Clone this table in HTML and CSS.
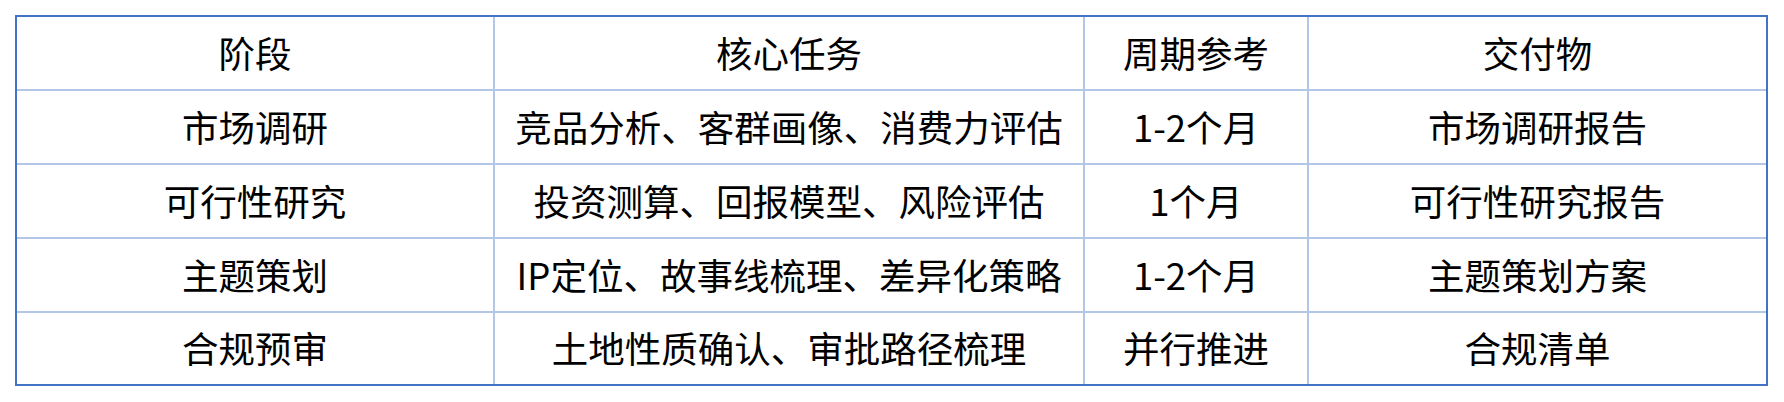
FILE: index.html
```html
<!DOCTYPE html>
<html lang="zh-CN">
<head>
<meta charset="utf-8">
<link rel="stylesheet" href="styles.css">
</head>
<body>
<div class="table">
  <div class="cell">阶段</div>
  <div class="cell">核心任务</div>
  <div class="cell">周期参考</div>
  <div class="cell">交付物</div>

  <div class="cell">市场调研</div>
  <div class="cell">竞品分析、客群画像、消费力评估</div>
  <div class="cell">1-2个月</div>
  <div class="cell">市场调研报告</div>

  <div class="cell">可行性研究</div>
  <div class="cell">投资测算、回报模型、风险评估</div>
  <div class="cell">1个月</div>
  <div class="cell">可行性研究报告</div>

  <div class="cell">主题策划</div>
  <div class="cell">IP定位、故事线梳理、差异化策略</div>
  <div class="cell">1-2个月</div>
  <div class="cell">主题策划方案</div>

  <div class="cell">合规预审</div>
  <div class="cell">土地性质确认、审批路径梳理</div>
  <div class="cell">并行推进</div>
  <div class="cell">合规清单</div>
</div>
</body>
</html>
```

FILE: styles.css
```css
html, body {
  margin: 0;
  padding: 0;
  background: #ffffff;
}

body {
  padding: 15px;
  font-family: "Noto Sans CJK SC", "Noto Sans", sans-serif;
  color: #000000;
}

.table {
  display: grid;
  grid-template-columns: 476px 588px 222px 457px;
  grid-template-rows: 72px 72px 72px 72px 71px;
  gap: 2px;
  width: max-content;
  background: #b4c6e7;
  border: 2px solid #4472c4;
}

.cell {
  background: #ffffff;
  display: flex;
  align-items: center;
  justify-content: center;
  font-size: 36.5px;
  line-height: 1;
  white-space: nowrap;
}
```
